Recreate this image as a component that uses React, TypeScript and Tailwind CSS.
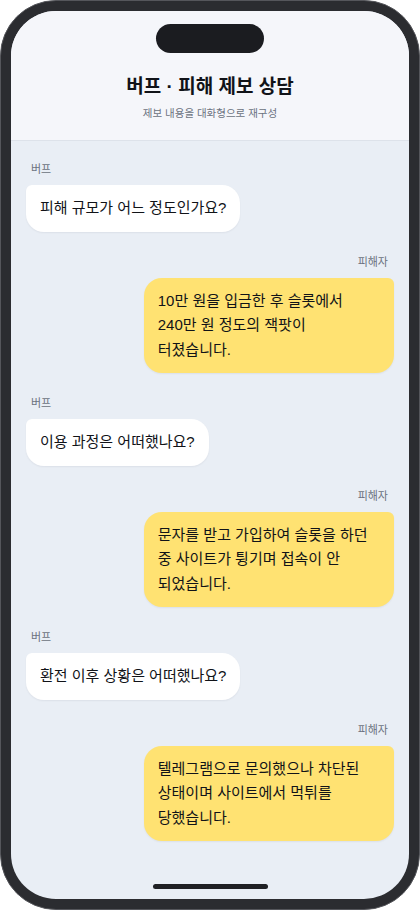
import React from "react";

type Msg = { from: "buff" | "victim"; text: string };

const messages: Msg[] = [
  { from: "buff", text: "피해 규모가 어느 정도인가요?" },
  { from: "victim", text: "10만 원을 입금한 후 슬롯에서 240만 원 정도의 잭팟이 터졌습니다." },
  { from: "buff", text: "이용 과정은 어떠했나요?" },
  { from: "victim", text: "문자를 받고 가입하여 슬롯을 하던 중 사이트가 튕기며 접속이 안 되었습니다." },
  { from: "buff", text: "환전 이후 상황은 어떠했나요?" },
  { from: "victim", text: "텔레그램으로 문의했으나 차단된 상태이며 사이트에서 먹튀를 당했습니다." },
];

function Bubble({ m }: { m: Msg }) {
  const mine = m.from === "victim";
  return (
    <div className={mine ? "flex flex-col items-end" : "flex flex-col items-start"}>
      <div
        className={
          "mb-2 text-[11px] leading-4 text-[#6b7280] " + (mine ? "mr-[6px]" : "ml-[5px]")
        }
      >
        {mine ? "피해자" : "버프"}
      </div>
      <div
        className={
          "max-w-[68%] break-keep px-3.5 py-[11px] text-[15px] leading-[24.5px] text-[#111318] shadow-[0_1px_2px_rgba(15,23,42,0.06)] " +
          (mine
            ? "rounded-[18px] rounded-tr-[6px] bg-[#ffe272]"
            : "rounded-[18px] rounded-tl-[6px] bg-white")
        }
      >
        {m.text}
      </div>
    </div>
  );
}

export default function App() {
  return (
    <div
      className="min-h-[912px] bg-white"
      style={{ fontFamily: '"Liberation Sans", "Noto Sans CJK KR", sans-serif' }}
    >
      <div className="h-[910px] w-[420px] rounded-[56px] border border-[#55565b] bg-[#2b2c30] p-[10px]">
        <div className="flex h-full flex-col overflow-hidden rounded-[45px] bg-[#e9eef5]">
          <header className="flex flex-col items-center border-b border-[#dde2ea] bg-[#f5f6fa] pt-[13px] pb-[20px]">
            <div className="h-[29px] w-[108px] rounded-full bg-[#1b1c20]" />
            <h1 className="mt-[21px] text-[19px] leading-[26px] font-bold text-[#111318]">
              버프 · 피해 제보 상담
            </h1>
            <p className="mt-[6px] text-[10.5px] leading-[14px] text-[#6b7280]">
              제보 내용을 대화형으로 재구성
            </p>
          </header>

          <div className="flex flex-1 flex-col gap-[22px] overflow-hidden px-[15px] pt-[20px]">
            {messages.map((m, i) => (
              <Bubble key={i} m={m} />
            ))}
          </div>

          <div className="flex justify-center pb-[10px]">
            <div className="h-[5px] w-[115px] rounded-full bg-[#1f2024]" />
          </div>
        </div>
      </div>
    </div>
  );
}
